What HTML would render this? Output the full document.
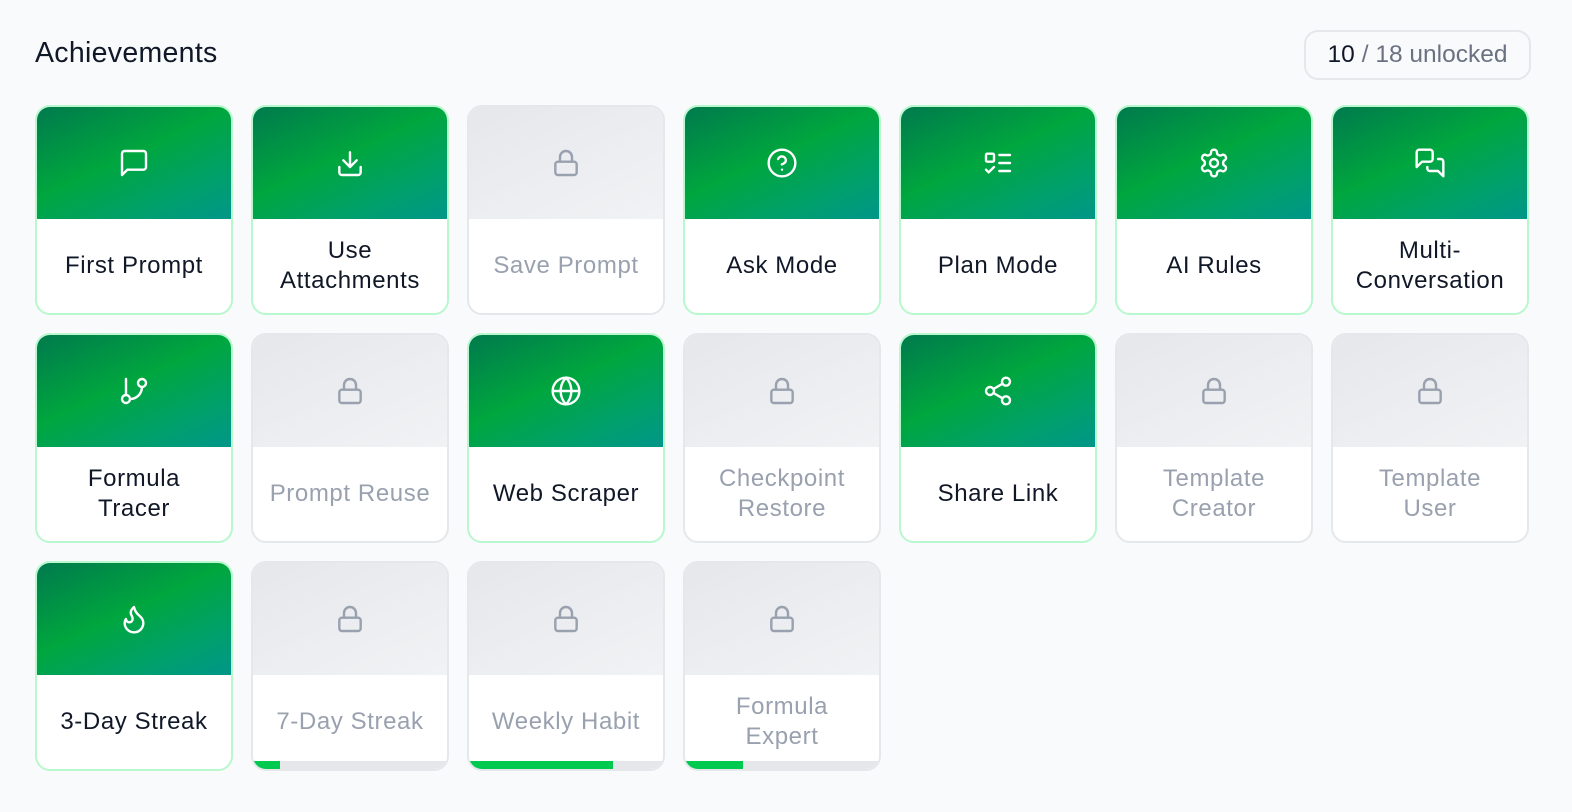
<!DOCTYPE html>
<html><head><meta charset="utf-8"><style>
*{box-sizing:border-box;margin:0;padding:0}
body{width:1572px;height:812px;background:#f9fafb;font-family:"Liberation Sans",sans-serif;position:relative;overflow:hidden}
h1{position:absolute;left:35px;top:37px;font-size:28.5px;font-weight:500;color:#101828;letter-spacing:0.3px}
.badge{position:absolute;left:1304px;top:30px;width:227px;height:50px;border:2px solid #e5e7eb;border-radius:14px;font-size:24.5px;color:#6a7282;display:flex;align-items:center;justify-content:center;background:#f9fafb}
.badge b{color:#101828;font-weight:500;margin-right:7px}
.grid{position:absolute;left:35px;top:105px;display:grid;grid-template-columns:repeat(7,198px);grid-auto-rows:210px;gap:18px}
.c{border:2px solid #b9f8cf;border-radius:15px;overflow:hidden;background:#fff;position:relative}
.t{height:112px;background:linear-gradient(155deg,#007a4d 0%,#00a63e 45%,#00a06a 75%,#009689 100%);display:flex;align-items:center;justify-content:center}
.l{border-color:#e5e7eb}
.l .t{background:linear-gradient(155deg,#e5e7eb 0%,#eceef1 60%,#f1f2f4 100%)}
.n{height:94px;display:flex;align-items:center;justify-content:center;text-align:center;font-size:24px;line-height:30px;color:#101828;letter-spacing:0.6px;padding:0 6px}
.l .n{color:#99a1af}
.p{position:absolute;left:0;right:0;bottom:0;height:8px;background:#e5e7eb}
.p i{display:block;height:100%;background:#00c950}
svg{width:32px;height:32px;fill:none;stroke:#fff;stroke-width:1.8;stroke-linecap:round;stroke-linejoin:round}
.l svg{stroke:#99a1af;width:32px;height:32px}
</style></head><body>
<h1>Achievements</h1>
<div class="badge"><b>10</b> / 18 unlocked</div>
<div class="grid">
<div class="c"><div class="t"><svg viewBox="0 0 24 24"><path d="M21 15a2 2 0 0 1-2 2H7l-4 4V5a2 2 0 0 1 2-2h14a2 2 0 0 1 2 2z"/></svg></div><div class="n">First Prompt</div></div>
<div class="c"><div class="t"><svg viewBox="0 0 24 24"><path d="M12 4v11M7 10l5 5 5-5M4 15v4a2 2 0 0 0 2 2h12a2 2 0 0 0 2-2v-4"/></svg></div><div class="n">Use Attachments</div></div>
<div class="c l"><div class="t"><svg viewBox="0 0 24 24"><rect x="4" y="11" width="16" height="10" rx="2"/><path d="M7.5 11V7.5a4.5 4.5 0 0 1 9 0V11"/></svg></div><div class="n">Save Prompt</div></div>
<div class="c"><div class="t"><svg viewBox="0 0 24 24"><circle cx="12" cy="12" r="10"/><path d="M9.1 9a3 3 0 0 1 5.8 1c0 2-3 3-3 3M12 17h.01"/></svg></div><div class="n">Ask Mode</div></div>
<div class="c"><div class="t"><svg viewBox="0 0 24 24"><rect x="3" y="5" width="6" height="6" rx="1"/><path d="M3 17l2 2 4-4M13 6h8M13 12h8M13 18h8"/></svg></div><div class="n">Plan Mode</div></div>
<div class="c"><div class="t"><svg viewBox="0 0 24 24"><path d="M12.22 2h-.44a2 2 0 0 0-2 2v.18a2 2 0 0 1-1 1.730l-.43.25a2 2 0 0 1-2 0l-.15-.08a2 2 0 0 0-2.73.73l-.22.38a2 2 0 0 0 .73 2.73l.15.1a2 2 0 0 1 1 1.72v.51a2 2 0 0 1-1 1.74l-.15.09a2 2 0 0 0-.73 2.73l.22.38a2 2 0 0 0 2.73.73l.15-.08a2 2 0 0 1 2 0l.43.25a2 2 0 0 1 1 1.73V20a2 2 0 0 0 2 2h.44a2 2 0 0 0 2-2v-.18a2 2 0 0 1 1-1.73l.43-.25a2 2 0 0 1 2 0l.15.08a2 2 0 0 0 2.73-.73l.22-.39a2 2 0 0 0-.73-2.73l-.15-.08a2 2 0 0 1-1-1.74v-.5a2 2 0 0 1 1-1.74l.15-.09a2 2 0 0 0 .73-2.73l-.22-.38a2 2 0 0 0-2.73-.73l-.15.08a2 2 0 0 1-2 0l-.43-.25a2 2 0 0 1-1-1.73V4a2 2 0 0 0-2-2z"/><circle cx="12" cy="12" r="3"/></svg></div><div class="n">AI Rules</div></div>
<div class="c"><div class="t"><svg viewBox="0 0 24 24"><path d="M14 9a2 2 0 0 1-2 2H6l-4 4V4a2 2 0 0 1 2-2h8a2 2 0 0 1 2 2z"/><path d="M18 9h2a2 2 0 0 1 2 2v11l-4-4h-6a2 2 0 0 1-2-2v-1"/></svg></div><div class="n">Multi-<br>Conversation</div></div>

<div class="c"><div class="t"><svg viewBox="0 0 24 24"><path d="M6 3v12"/><circle cx="18" cy="6" r="3"/><circle cx="6" cy="18" r="3"/><path d="M18 9a9 9 0 0 1-9 9"/></svg></div><div class="n">Formula<br>Tracer</div></div>
<div class="c l"><div class="t"><svg viewBox="0 0 24 24"><rect x="4" y="11" width="16" height="10" rx="2"/><path d="M7.5 11V7.5a4.5 4.5 0 0 1 9 0V11"/></svg></div><div class="n">Prompt Reuse</div></div>
<div class="c"><div class="t"><svg viewBox="0 0 24 24"><circle cx="12" cy="12" r="10"/><path d="M12 2a14.5 14.5 0 0 0 0 20 14.5 14.5 0 0 0 0-20M2 12h20"/></svg></div><div class="n">Web Scraper</div></div>
<div class="c l"><div class="t"><svg viewBox="0 0 24 24"><rect x="4" y="11" width="16" height="10" rx="2"/><path d="M7.5 11V7.5a4.5 4.5 0 0 1 9 0V11"/></svg></div><div class="n">Checkpoint<br>Restore</div></div>
<div class="c"><div class="t"><svg viewBox="0 0 24 24"><circle cx="18" cy="5" r="3"/><circle cx="6" cy="12" r="3"/><circle cx="18" cy="19" r="3"/><path d="M8.6 13.5l6.8 4M15.4 6.5l-6.8 4"/></svg></div><div class="n">Share Link</div></div>
<div class="c l"><div class="t"><svg viewBox="0 0 24 24"><rect x="4" y="11" width="16" height="10" rx="2"/><path d="M7.5 11V7.5a4.5 4.5 0 0 1 9 0V11"/></svg></div><div class="n">Template<br>Creator</div></div>
<div class="c l"><div class="t"><svg viewBox="0 0 24 24"><rect x="4" y="11" width="16" height="10" rx="2"/><path d="M7.5 11V7.5a4.5 4.5 0 0 1 9 0V11"/></svg></div><div class="n">Template<br>User</div></div>

<div class="c"><div class="t"><svg viewBox="0 0 24 24"><path d="M8.5 14.5A2.5 2.5 0 0 0 11 12c0-1.38-.5-2-1-3-1.07-2.14-.22-4.05 2-6 .5 2.5 2 4.9 4 6.5 2 1.6 3 3.5 3 5.5a7 7 0 1 1-14 0c0-1.15.43-2.290 1-3a2.5 2.5 0 0 0 2.5 2.5z"/></svg></div><div class="n">3-Day Streak</div></div>
<div class="c l"><div class="t"><svg viewBox="0 0 24 24"><rect x="4" y="11" width="16" height="10" rx="2"/><path d="M7.5 11V7.5a4.5 4.5 0 0 1 9 0V11"/></svg></div><div class="n">7-Day Streak</div><div class="p"><i style="width:14%"></i></div></div>
<div class="c l"><div class="t"><svg viewBox="0 0 24 24"><rect x="4" y="11" width="16" height="10" rx="2"/><path d="M7.5 11V7.5a4.5 4.5 0 0 1 9 0V11"/></svg></div><div class="n">Weekly Habit</div><div class="p"><i style="width:74%"></i></div></div>
<div class="c l"><div class="t"><svg viewBox="0 0 24 24"><rect x="4" y="11" width="16" height="10" rx="2"/><path d="M7.5 11V7.5a4.5 4.5 0 0 1 9 0V11"/></svg></div><div class="n">Formula<br>Expert</div><div class="p"><i style="width:30%"></i></div></div>
</div>
</body></html>
